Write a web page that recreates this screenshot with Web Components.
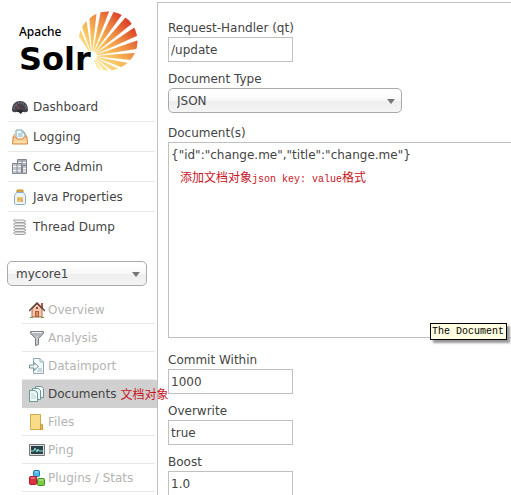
<!DOCTYPE html>
<html lang="en">
<head>
<meta charset="utf-8">
<title>Solr Admin</title>
<style>
  body { margin: 0; background: #fff; color: #444; font: 12px/18px "DejaVu Sans", sans-serif; height: 100vh; overflow: hidden; }
</style>
</head>
<body>
<solr-app>
  <solr-logo slot="side"></solr-logo>
  <nav-list slot="side">
    <nav-item icon="dashboard">Dashboard</nav-item>
    <nav-item icon="logging">Logging</nav-item>
    <nav-item icon="cores">Core Admin</nav-item>
    <nav-item icon="jar">Java Properties</nav-item>
    <nav-item icon="threads" last>Thread Dump</nav-item>
  </nav-list>
  <core-picker slot="side"><select-box label="Core selector" value="mycore1" hidelabel></select-box></core-picker>
  <nav-list slot="side" sub>
    <nav-item sub icon="house">Overview</nav-item>
    <nav-item sub icon="funnel">Analysis</nav-item>
    <nav-item sub icon="import">Dataimport</nav-item>
    <nav-item sub icon="docs" active>Documents<red-note slot="note">文档对象</red-note></nav-item>
    <nav-item sub icon="folder">Files</nav-item>
    <nav-item sub icon="ping">Ping</nav-item>
    <nav-item sub icon="blocks">Plugins / Stats</nav-item>
  </nav-list>
  <text-field label="Request-Handler (qt)" value="/update"></text-field>
  <select-box wide label="Document Type" value="JSON"></select-box>
  <document-field label="Document(s)" value='{"id":"change.me","title":"change.me"}'>
    <red-note slot="note">添加文档对象<span>json key: value</span>格式</red-note>
    <tool-tip slot="tip">The Document</tool-tip>
  </document-field>
  <text-field label="Commit Within" value="1000"></text-field>
  <text-field label="Overwrite" value="true"></text-field>
  <text-field label="Boost" value="1.0"></text-field>
</solr-app>

<script>
const ICONS = {
  dashboard: `<path d="M0 11C0 5 3.500 2 8 2s8 3 8 9c0 2-2 2.500-4 2H4c-2 .5-4 0-4-2Z" fill="#45434b"/><path d="M2 10c0-4 2.500-6 6-6s6 2 6 6" fill="none" stroke="#8b8790" stroke-width="1.500" stroke-dasharray="1 1.500"/><path d="m4 6 5 6" stroke="#b8504a"/><path d="M5 12c1-2 5-2 6 0l-2 3Z" fill="#29272d"/>`,
  logging: `<path d="M4 1h6l3 3v7H4Z" fill="#edf7fa" stroke="#7ea5b5"/><path d="M10 1v3h3M6 5h4M6 7h5" fill="none" stroke="#8bb4c3"/><path d="M1 8h3l1 2h6l1-2h3l.5 7H.5Z" fill="#f9cf96" stroke="#d98b48"/><path d="M1 8 3 5M15 8l-2-3" stroke="#d98b48"/><path d="M2 13h12" stroke="#fff0bd"/>`,
  cores: `<path d="M5.500.5h9v10h-9Z" fill="#aeb3bb" stroke="#80868f"/><path d="M.5 4.500h9v10h-9ZM10.500 6.500h4v8h-4Z" fill="#c3c7cd" stroke="#80868f"/><path d="M6 3.500h8M1 7.500h8M1 11.500h8M11 9.500h3M11 12h3" stroke="#f6f7f9"/><path d="M10 1v4M5 5v9" stroke="#858c96"/>`,
  jar: `<path d="M5 1h6v2H5Z" fill="#e8b950" stroke="#c18c27"/><path d="M4.500 3.500h7l2 3v8l-1 1h-9l-1-1v-8Z" fill="#eaf4fb" stroke="#8facc3"/><path d="M5 8h6v5H5Z" fill="#edc46a"/><path d="M6 9h2v2H6ZM9 10h2v3H9Z" fill="#d9ae5c"/>`,
  threads: `<g fill="#f0f0f0" stroke="#a2a2a2"><path d="M1.500 1h10l2 1-1 1.500h-9Z"/><path d="M3 4h9l2 1-2 1.500H3L1.500 5Z"/><path d="M3 7h9l2 1-2 1.500H3L1.500 8Z"/><path d="M3 10h9l2 1-2 1.500H3L1.500 11Z"/><path d="M3 13h9l2 1-2 1.500H3L1.500 14Z"/></g>`,
  house: `<path d="M12 1h2v5h-2Z" fill="#b75540"/><path d="M3 7 8 2l5 5v8H3Z" fill="#f6c7a8" stroke="#a76b50"/><path d="M6 9h4v6H6Z" fill="#b25b43"/><path d="M7 10h2v4H7Z" fill="#d98f62"/><path d="M7 5h2v2H7Z" fill="#7d5548"/><path d="m0 9 8-8 8 8" fill="none" stroke="#5d4640" stroke-width="1.500"/><path d="M1 15.500h3M12 15.500h3" stroke="#67a041"/>`,
  funnel: `<path d="M1.500 1.500h13v2l-5 5v6l-3 1v-7l-5-5Z" fill="#b4b8bc" stroke="#7c8187"/><path d="M3 2.500h10" stroke="#eef0f2"/><path d="M8 6v8" fill="none" stroke="#ddd"/>`,
  import: `<path d="M4.500.5H11l3.500 3.500v11.500h-10Z" fill="#f3f8fa" stroke="#92a8b3"/><path d="M11 .5V4h3.500M9 11h4M8 13h5" fill="none" stroke="#9cb8c4"/><path d="M.5 7H5V4.500l4.500 4-4.500 4V10H.5Z" fill="#edf5f7" stroke="#75909c"/>`,
  docs: `<g fill="#f1faf9" stroke="#6d9594"><path d="M6.500.5h6l2 2v9h-8Z"/><path d="M3.500 2.500h6l2 2v9h-8Z"/><path d="M.5 4.500h6l2 2v9h-8Z"/></g><path d="M6.500 4.500v2h2M2 8h3M2 10h5M2 12h5" fill="none" stroke="#b5d3d2"/>`,
  folder: `<path d="M1.500.5h10v9l2 1v5h-12Z" fill="#edbf59" stroke="#d5aa4e"/><path d="M2 1h9v14H2Z" fill="#f9dc87"/><path d="M11.500 15.500h2v-4l-2-1Z" fill="#f0c565" stroke="#c99835"/>`,
  ping: `<path d="M.5 2.500h15v11H.5Z" fill="#ddd" stroke="#777"/><path d="M2 4h12v8H2Z" fill="#28434b"/><path d="M2 9h3l1-3 2 4 1-3 1 2h4" fill="none" stroke="#8ce0cf"/>`,
  blocks: `<rect x="4.500" y=".5" width="6" height="6" rx="1" fill="#48b9e8" stroke="#217da9"/><rect x=".5" y="6.500" width="7" height="8" rx="1" fill="#dc3043" stroke="#ab1d27"/><rect x="8.500" y="8.500" width="7" height="7" rx="1" fill="#7bcc43" stroke="#458e27"/><path d="M6 2h3M2 8h4M10 10h4" stroke="#fff" opacity=".6"/>`
};

function define(name, render) {
  customElements.define(name, class extends HTMLElement {
    constructor() { super(); this.attachShadow({ mode: "open" }); }
    connectedCallback() { this.shadowRoot.innerHTML = render(this); }
  });
}
const esc = s => s.replace(/&/g, "&amp;").replace(/"/g, "&quot;").replace(/</g, "&lt;");

define("solr-app", () => `<style>
  :host { display: grid; grid-template-columns: 157px minmax(0, 1fr); min-height: 100vh; padding-top: 2px; box-sizing: border-box; }
  aside { position: relative; z-index: 1; }
  main { border: solid #c0c0c0; border-width: 1px 0 0 1px; padding: 16px 0 0 10px; display: flex; flex-direction: column; gap: 8px; }
</style><aside><slot name="side"></slot></aside><main><slot></slot></main>`);

// Each ray is a wedge from a shared origin, clipped to the disc.
define("solr-logo", () => {
  let rays = "";
  for (let a = -61; a < 130; a += 15) {
    const p = d => { const r = d * Math.PI / 180; return (14 + 70 * Math.cos(r)).toFixed(1) + "," + (45 - 70 * Math.sin(r)).toFixed(1); };
    rays += `<polygon points="14,45 ${p(a - 5)} ${p(a + 5)}"/>`;
  }
  return `<style>
  :host { display: grid; grid-template-columns: 59px 60px; padding: 9px 0 21px 19px; height: 60px; color: #000; }
  svg { width: 60px; height: 60px; }
  .words { padding-top: 12px; white-space: nowrap; position: relative; z-index: 1; }
  small { display: block; font: 500 12px/18px "Noto Sans", sans-serif; }
  b { display: block; font: bold 32px/36px "DejaVu Sans", sans-serif; }
</style><div class="words"><small>Apache</small><b>Solr</b></div>
<svg viewBox="0 0 60 60" aria-hidden="true"><defs><clipPath id="c"><circle cx="30" cy="30" r="29.500"/></clipPath>
<linearGradient id="g" gradientUnits="userSpaceOnUse" x1="6" y1="52" x2="50" y2="8"><stop offset=".1" stop-color="#fdeaa0"/><stop offset=".4" stop-color="#f8c05a"/><stop offset=".7" stop-color="#ed8440"/><stop offset="1" stop-color="#d93a26"/></linearGradient></defs>
<g clip-path="url(#c)" fill="url(#g)">${rays}</g><circle cx="14" cy="45" r="5" fill="#fff"/></svg>`;
});

define("nav-list", el => `<style>
  :host { display: block; }
  nav { padding: ${el.hasAttribute("sub") ? "10px 2px 0 22px" : "0 2px 0 8px"}; }
</style><nav><slot></slot></nav>`);

define("nav-item", el => {
  const sub = el.hasAttribute("sub"), active = el.hasAttribute("active");
  return `<style>
  :host { display: flex; align-items: center; box-sizing: border-box; height: ${sub ? 28 : 30}px; border-bottom: 1px solid ${active ? "#d0d0d0" : el.hasAttribute("last") ? "transparent" : "#e8e8e8"}; background: ${active ? "#d0d0d0" : "none"}; margin-right: ${active ? "-2px" : "0"}; padding-left: ${sub ? 7 : 4}px; white-space: nowrap; }
  a { display: flex; align-items: center; gap: ${sub ? 3 : 5}px; color: ${sub && !active ? "#b4b4b4" : "#444"}; text-decoration: none; }
  svg { width: 16px; height: 16px; flex: none; }
  ::slotted(red-note) { margin-left: 4px; }
</style><a href="#"><svg viewBox="0 0 16 16" aria-hidden="true">${ICONS[el.getAttribute("icon")]}</svg><span><slot></slot></span></a><slot name="note"></slot>`;
});

define("core-picker", () => `<style>:host { display: block; padding: 19px 10px 0 7px; }</style><slot></slot>`);

define("select-box", el => {
  const hide = el.hasAttribute("hidelabel"), label = el.getAttribute("label");
  return `<style>
  :host { display: block; width: 100%; max-width: ${el.hasAttribute("wide") ? "234px" : "none"}; }
  label { display: block; }
  .box { position: relative; }
  .box::after { content: ""; position: absolute; right: 7px; top: 11px; border: solid transparent; border-width: 5px 4px 0; border-top-color: #777; pointer-events: none; }
  select { appearance: none; display: block; width: 100%; height: 25px; padding: 0 20px 0 8px; border: 1px solid #aaa; border-radius: 5px; background: linear-gradient(#fff 20%, #f6f6f6 50%, #eee 52%, #f4f4f4); color: #444; font: inherit; }
</style>${hide ? "" : `<label for="s">${label}</label>`}<div class="box"><select id="s" ${hide ? `aria-label="${label}"` : ""}><option>${el.getAttribute("value")}</option></select></div>`;
});

define("text-field", el => `<style>
  :host { display: block; }
  label { display: block; }
  input { display: block; box-sizing: border-box; width: 125px; height: 25px; padding: 0 2px; border: 1px solid #c0c0c0; background: #fff; color: #444; font: inherit; }
</style><label for="i">${el.getAttribute("label")}</label><input id="i" value="${esc(el.getAttribute("value"))}">`);

define("document-field", el => `<style>
  :host { display: block; margin: 3px 0 5px; }
  label { display: block; }
  .box { position: relative; }
  textarea { display: block; box-sizing: border-box; width: 100%; height: 196px; padding: 3px 2px; border: 1px solid #c0c0c0; border-right: 0; resize: none; color: #444; font: inherit; background: #fff; }
  ::slotted(red-note) { position: absolute; left: 12px; top: 26px; }
  ::slotted(tool-tip) { position: absolute; right: 4px; bottom: -2px; }
</style><label for="t">${el.getAttribute("label")}</label><div class="box"><textarea id="t">${esc(el.getAttribute("value"))}</textarea><slot name="note"></slot><slot name="tip"></slot></div>`);

define("red-note", () => `<style>
  :host { display: inline-block; color: #c8141e; font: 12px/18px "Noto Sans CJK SC", sans-serif; white-space: nowrap; }
  ::slotted(span) { font: 10px/18px "Liberation Mono", monospace; }
</style><slot></slot>`);

define("tool-tip", () => `<style>
  :host { display: block; border: 1px solid #000; background: #ffffe1; color: #000; padding: 0 2px 0 1px; font: 10px/15px "Liberation Mono", monospace; box-shadow: 3px 3px 2px #999; white-space: nowrap; }
</style><slot></slot>`);
</script>
</body>
</html>
